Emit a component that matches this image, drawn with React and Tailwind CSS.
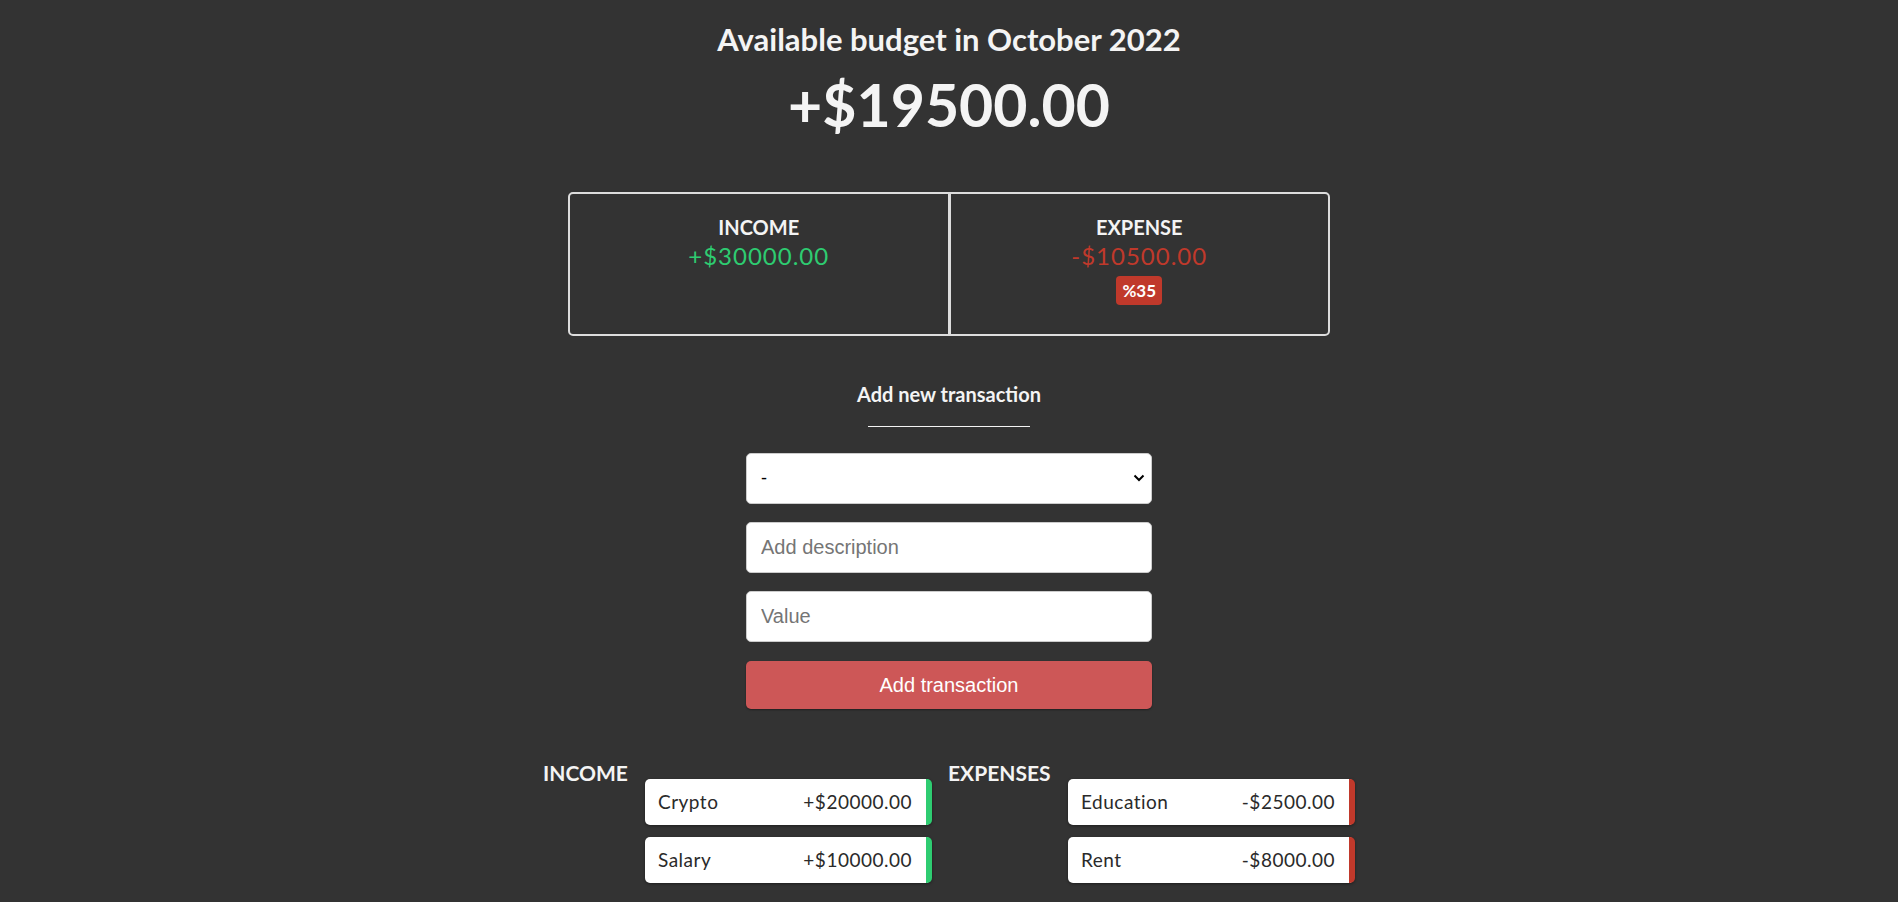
const income = [
  { id: 1, name: 'Crypto', value: 20000 },
  { id: 2, name: 'Salary', value: 10000 },
]

const expenses = [
  { id: 3, name: 'Education', value: 2500 },
  { id: 4, name: 'Rent', value: 8000 },
]

function ItemList({ title, items, sign, bar, labelWidth }) {
  return (
    <div className="flex items-start gap-4">
      <h3 className={`whitespace-nowrap text-[21px] font-bold leading-[28px] uppercase ${labelWidth}`}>{title}</h3>
      <div className="mt-[20px] flex flex-col gap-3">
        {items.map((item) => (
          <div
            key={item.id}
            className={`flex h-[46px] w-[287px] items-center justify-between rounded-[5px] border-r-[6px] bg-white pl-[13px] pr-[14px] text-[19px] tracking-[0.5px] text-[#2a2a2a] shadow-[0_1px_3px_rgba(0,0,0,0.4)] ${bar}`}
          >
            <span>{item.name}</span>
            <span>
              {sign}${item.value.toFixed(2)}
            </span>
          </div>
        ))}
      </div>
    </div>
  )
}

export default function App() {
  const totalIncome = income.reduce((sum, i) => sum + i.value, 0)
  const totalExpense = expenses.reduce((sum, i) => sum + i.value, 0)
  const budget = totalIncome - totalExpense
  const percent = Math.round((totalExpense / totalIncome) * 100)

  return (
    <div className="min-h-screen bg-[#333333] font-['Lato',sans-serif] text-[#f4f4f4]">
      <div className="flex flex-col items-center pt-[22px]">
        {/* Header */}
        <h1 className="text-[31px] font-bold leading-[34px]">Available budget in October 2022</h1>
        <p className="mt-[14px] text-[59px] font-bold leading-[70px]">+${budget.toFixed(2)}</p>

        {/* Summary */}
        <div className="mt-[52px] flex h-[144px] w-[762px] rounded-[5px] border-2 border-[#dddddd]">
          <div className="flex flex-1 flex-col items-center border-r-[3px] border-[#dddddd] pt-[19px]">
            <h2 className="text-[20px] font-bold leading-[28px] uppercase">Income</h2>
            <p className="text-[24px] leading-[30px] tracking-[1px] text-[#2ecc71]">+${totalIncome.toFixed(2)}</p>
          </div>
          <div className="flex flex-1 flex-col items-center pt-[19px]">
            <h2 className="text-[20px] font-bold leading-[28px] uppercase">Expense</h2>
            <p className="text-[24px] leading-[30px] tracking-[1px] text-[#c0392b]">-${totalExpense.toFixed(2)}</p>
            <span className="mt-[5px] flex h-[29px] items-center rounded-[4px] bg-[#c0392b] px-[6px] text-[17px] font-bold text-white">
              %{percent}
            </span>
          </div>
        </div>

        {/* Form */}
        <h3 className="mt-[45px] text-[20px] font-bold leading-[26px]">Add new transaction</h3>
        <div className="mt-[19px] h-px w-[162px] bg-[#f4f4f4]" />

        <form className="mt-[26px] flex w-[406px] flex-col gap-[18px] font-['Liberation_Sans',Arial,sans-serif]">
          <div className="relative">
            <select className="h-[51px] w-full appearance-none rounded-[5px] border border-[#cccccc] bg-white pl-[14px] text-[18px] text-black outline-none">
              <option>-</option>
              <option>Income</option>
              <option>Expense</option>
            </select>
            <svg
              className="pointer-events-none absolute right-[7px] top-[20px]"
              width="12"
              height="10"
              viewBox="0 0 12 10"
              fill="none"
            >
              <path d="M1.5 2.5 L6 7 L10.5 2.5" stroke="#000" strokeWidth="2" />
            </svg>
          </div>
          <input
            className="h-[51px] w-full rounded-[5px] border border-[#cccccc] bg-white px-[14px] text-[20px] text-black outline-none placeholder:text-[#757575]"
            placeholder="Add description"
          />
          <input
            className="h-[51px] w-full rounded-[5px] border border-[#cccccc] bg-white px-[14px] text-[20px] text-black outline-none placeholder:text-[#757575]"
            placeholder="Value"
          />
          <button
            type="button"
            className="mt-[1px] h-[48px] w-full rounded-[5px] bg-[#cd5757] text-[20px] text-white shadow-[0_1px_2px_rgba(0,0,0,0.4)]"
          >
            Add transaction
          </button>
        </form>

        {/* Lists */}
        <div className="mt-[50px] flex gap-4 pb-6">
          <ItemList title="Income" items={income} sign="+" bar="border-[#2ecc71]" labelWidth="w-[86px]" />
          <ItemList title="Expenses" items={expenses} sign="-" bar="border-[#c0392b]" labelWidth="w-[104px]" />
        </div>
      </div>
    </div>
  )
}
